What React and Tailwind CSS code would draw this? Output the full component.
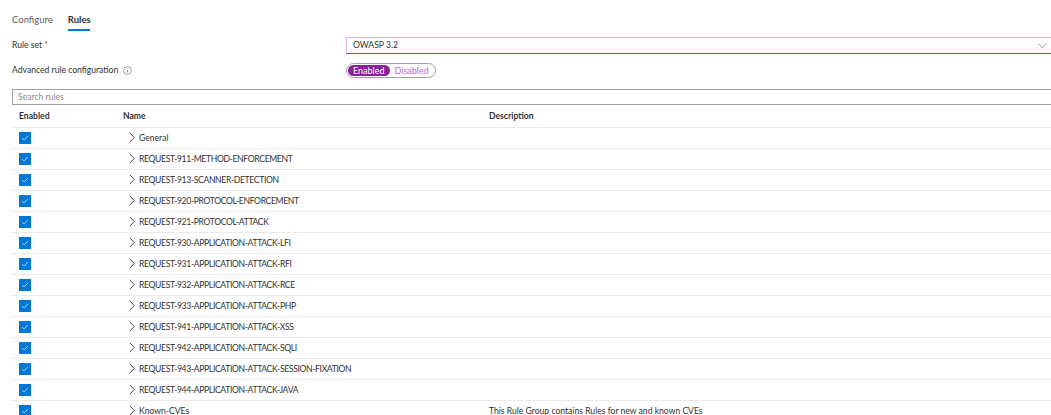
import { useState } from 'react';

const ruleGroups = [
  { name: 'General', description: '' },
  { name: 'REQUEST-911-METHOD-ENFORCEMENT', description: '' },
  { name: 'REQUEST-913-SCANNER-DETECTION', description: '' },
  { name: 'REQUEST-920-PROTOCOL-ENFORCEMENT', description: '' },
  { name: 'REQUEST-921-PROTOCOL-ATTACK', description: '' },
  { name: 'REQUEST-930-APPLICATION-ATTACK-LFI', description: '' },
  { name: 'REQUEST-931-APPLICATION-ATTACK-RFI', description: '' },
  { name: 'REQUEST-932-APPLICATION-ATTACK-RCE', description: '' },
  { name: 'REQUEST-933-APPLICATION-ATTACK-PHP', description: '' },
  { name: 'REQUEST-941-APPLICATION-ATTACK-XSS', description: '' },
  { name: 'REQUEST-942-APPLICATION-ATTACK-SQLI', description: '' },
  { name: 'REQUEST-943-APPLICATION-ATTACK-SESSION-FIXATION', description: '' },
  { name: 'REQUEST-944-APPLICATION-ATTACK-JAVA', description: '' },
  { name: 'Known-CVEs', description: 'This Rule Group contains Rules for new and known CVEs' },
];

function Checkbox() {
  return (
    <span className="flex h-[12px] w-[12px] items-center justify-center bg-[#0078d4]">
      <svg width="8" height="8" viewBox="0 0 8 8" fill="none">
        <path d="M1.2 4.2 3.1 6 6.9 2" stroke="#cfe4f7" strokeWidth="0.8" />
      </svg>
    </span>
  );
}

function Chevron() {
  return (
    <svg width="6" height="11" viewBox="0 0 6 11" fill="none">
      <path d="M0.8 0.8 5.2 5.5 0.8 10.2" stroke="#323130" strokeWidth="0.9" />
    </svg>
  );
}

export default function App() {
  const [advanced, setAdvanced] = useState(true);

  return (
    <div
      className="h-[415px] w-[1051px] overflow-hidden bg-white text-[8.6px] text-[#323130]"
      style={{ fontFamily: 'Lato, "Open Sans", sans-serif' }}
    >
      <div className="w-[1070px] pl-[12px]">
        {/* tabs */}
        <div className="flex h-[33px] items-start gap-[15px] pt-[13px] text-[9.5px]">
          <span className="text-[#605e5c]">Configure</span>
          <span className="flex flex-col items-center font-bold">
            Rules
            <span className="mt-[2px] h-[2px] w-[22px] bg-[#0078d4]" />
          </span>
        </div>

        <div className="flex h-[25px] items-center">
          <span className="w-[334px]">
            Rule set <span className="text-[#a4262c]">*</span>
          </span>
          <div className="flex h-[17px] flex-1 items-center justify-between border border-[#dcb3e3] border-b-[#9c3cb0] pl-[6px] pr-[22px]">
            <span>OWASP 3.2</span>
            <svg width="9" height="6" viewBox="0 0 9 6" fill="none">
              <path d="M0.5 0.8 4.5 4.8 8.5 0.8" stroke="#8a8886" strokeWidth="0.9" />
            </svg>
          </div>
        </div>

        <div className="flex h-[25px] items-center">
          <span className="flex w-[334px] items-center gap-[5px]">
            Advanced rule configuration
            <svg width="9" height="9" viewBox="0 0 9 9" fill="none">
              <circle cx="4.5" cy="4.5" r="3.9" stroke="#605e5c" strokeWidth="0.6" />
              <path d="M4.5 4v2.6" stroke="#605e5c" strokeWidth="0.7" />
              <circle cx="4.5" cy="2.6" r="0.45" fill="#605e5c" />
            </svg>
          </span>
          <div className="flex h-[15px] items-center rounded-full border border-[#a19f9d] p-[1px]">
            <button
              onClick={() => setAdvanced(true)}
              className={`h-[11px] rounded-full px-[5px] text-[9px] leading-[11px] ${advanced ? 'bg-[#8a1fa0] text-white' : 'text-[#b36cc4]'}`}
            >
              Enabled
            </button>
            <button
              onClick={() => setAdvanced(false)}
              className={`h-[11px] rounded-full px-[5px] text-[9px] leading-[11px] ${!advanced ? 'bg-[#8a1fa0] text-white' : 'text-[#b36cc4]'}`}
            >
              Disabled
            </button>
          </div>
        </div>

        <div className="mt-[6px] flex h-[16px] items-center border border-[#a19f9d] px-[5px] text-[#8a8886]">
          Search rules
        </div>

        {/* rule group table */}
        <div className="flex h-[23px] items-center border-b border-[#edebe9] font-bold">
          <span className="w-[111px] pl-[7px]">Enabled</span>
          <span className="w-[366px]">Name</span>
          <span>Description</span>
        </div>
        {ruleGroups.map((group) => (
          <div key={group.name} className="flex h-[21px] items-center border-b border-[#edebe9]">
            <span className="w-[111px] pl-[7px]">
              <Checkbox />
            </span>
            <span className="flex w-[366px] items-center gap-[4px] pl-[6px]">
              <Chevron />
              <span className={group.name.startsWith('REQUEST') ? 'tracking-[-0.35px]' : ''}>
                {group.name}
              </span>
            </span>
            <span>{group.description}</span>
          </div>
        ))}
      </div>
    </div>
  );
}
